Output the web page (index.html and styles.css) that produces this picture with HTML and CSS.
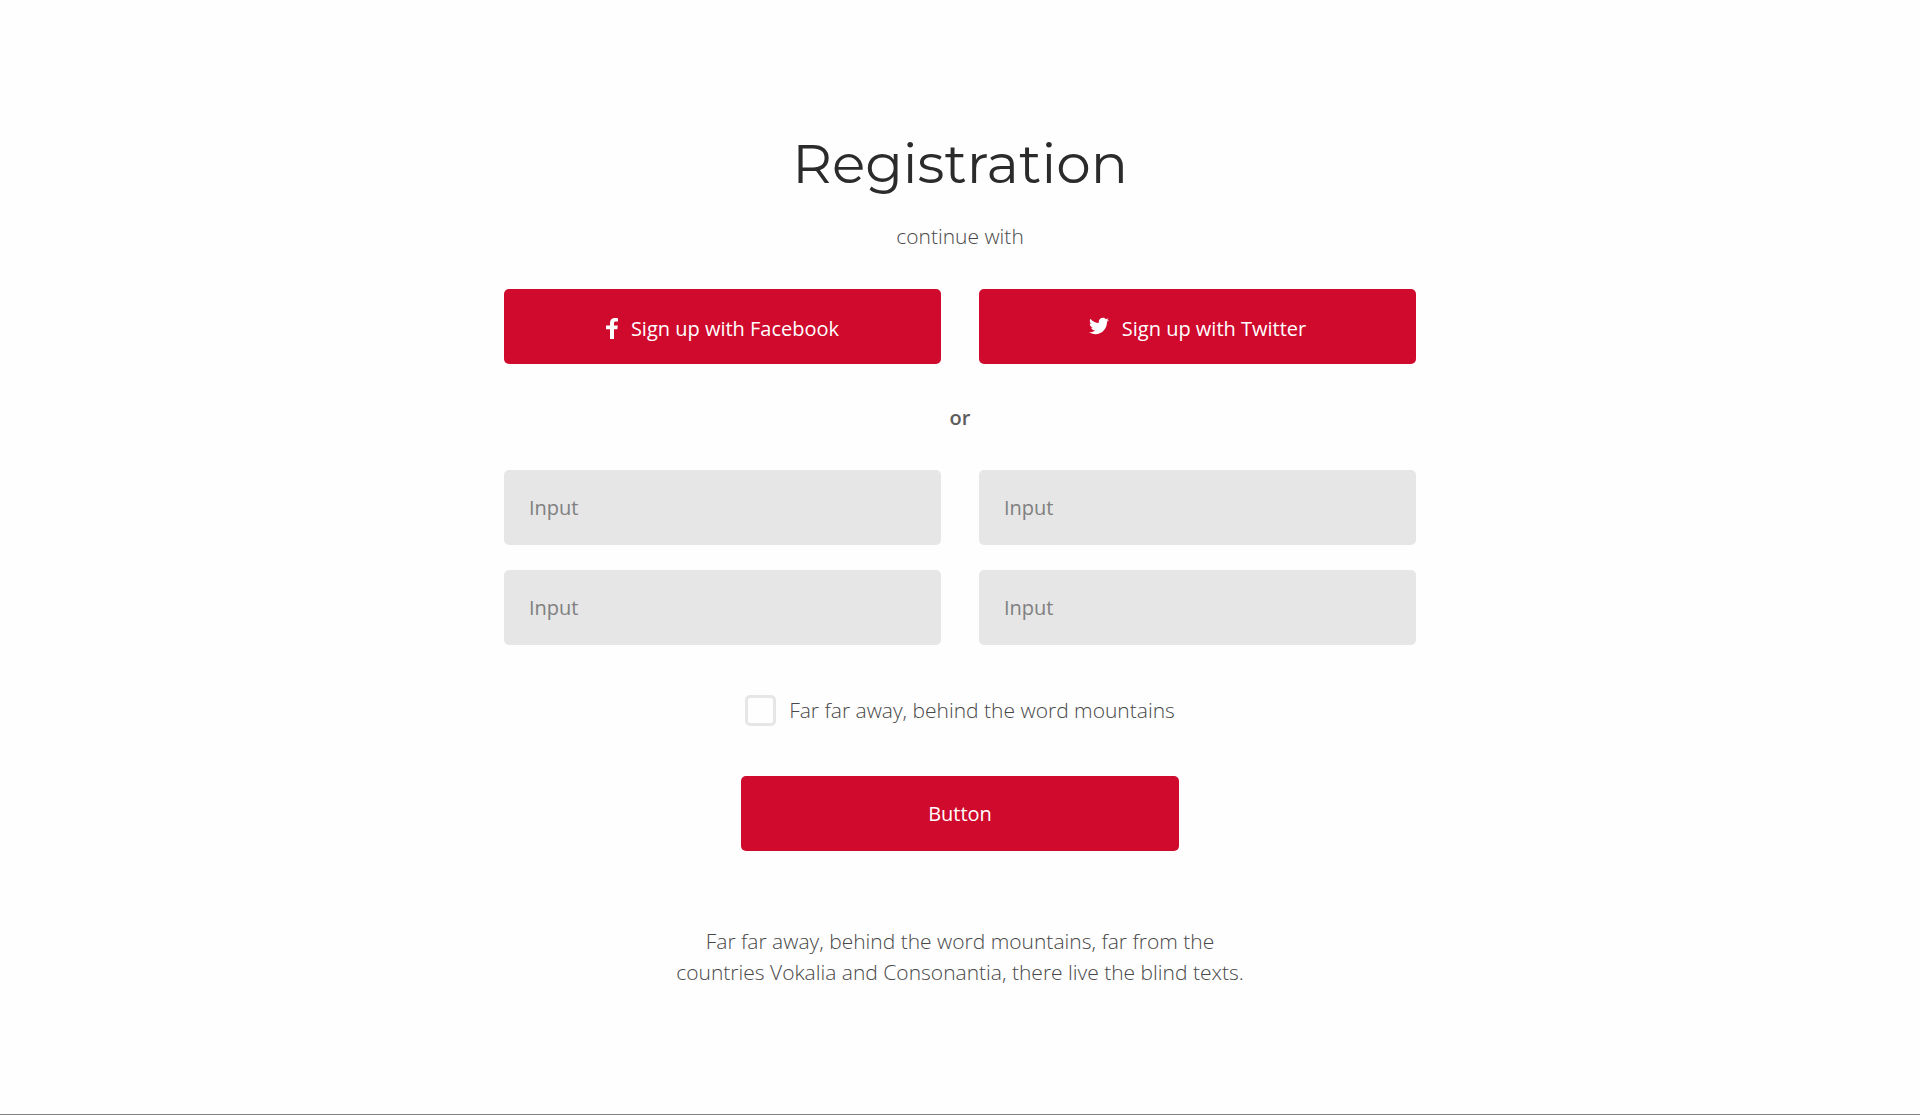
FILE: index.html
```html
<!DOCTYPE html>
<html lang="en">
<head>
    <meta charset="UTF-8">
    <meta name="viewport" content="width=device-width, initial-scale=1.0">
    <title>Registration</title>
    <link rel="stylesheet" href="styles.css">
</head>
<body>
    <main class="registration">
        <h1 class="title">Registration</h1>
        <p class="subtitle">continue with</p>

        <form class="form">
            <!-- Social sign up -->
            <div class="row">
                <button type="button" class="btn btn-social">
                    <svg class="icon icon-facebook" viewBox="0 0 12 21" aria-hidden="true">
                        <path d="M12 .2v3.400h-2C8.500 3.600 8 4.200 8 5.300V7.500h3.800l-.5 3.700H8V21H4v-9.800H0V7.500h4V4.900C4 1.700 5.900 0 9 0c1.400 0 2.500.1 3 .2z"/>
                    </svg>
                    <span>Sign up with Facebook</span>
                </button>
                <button type="button" class="btn btn-social">
                    <svg class="icon icon-twitter" viewBox="0 0 24 24" aria-hidden="true">
                        <path d="M23.954 4.569c-.885.389-1.830.654-2.825.775 1.014-.611 1.794-1.574 2.163-2.723-.951.555-2.005.959-3.127 1.184-.896-.959-2.173-1.559-3.591-1.559-2.717 0-4.920 2.203-4.920 4.917 0 .390.045.765.127 1.124C7.691 8.094 4.066 6.130 1.640 3.161c-.427.722-.666 1.561-.666 2.475 0 1.710.870 3.213 2.188 4.096-.807-.026-1.566-.248-2.228-.616v.061c0 2.385 1.693 4.374 3.946 4.827-.413.111-.849.171-1.296.171-.314 0-.615-.030-.916-.086.631 1.953 2.445 3.377 4.604 3.417-1.680 1.319-3.809 2.105-6.102 2.105-.390 0-.779-.023-1.170-.067 2.189 1.394 4.768 2.209 7.557 2.209 9.054 0 13.999-7.496 13.999-13.986 0-.209 0-.420-.015-.630.961-.689 1.800-1.560 2.460-2.548l-.047-.020z"/>
                    </svg>
                    <span>Sign up with Twitter</span>
                </button>
            </div>

            <p class="divider">or</p>

            <!-- Fields -->
            <div class="row">
                <input type="text" class="field" placeholder="Input" aria-label="Input 1">
                <input type="text" class="field" placeholder="Input" aria-label="Input 2">
                <input type="text" class="field" placeholder="Input" aria-label="Input 3">
                <input type="text" class="field" placeholder="Input" aria-label="Input 4">
            </div>

            <label class="check" for="agree">
                <input type="checkbox" class="check-box" id="agree">
                <span>Far far away, behind the word mountains</span>
            </label>

            <button type="submit" class="btn btn-submit">Button</button>
        </form>

        <p class="note">Far far away, behind the word mountains, far from the countries Vokalia and Consonantia, there live the blind texts.</p>
    </main>
</body>
</html>
```

FILE: styles.css
```css
* {
    box-sizing: border-box;
}

body {
    margin: 0;
    min-height: 100vh;
    background-color: #fefefe;
    border-bottom: 1px solid #808080;
    color: #484848;
    font-family: 'Open Sans', sans-serif;
    font-size: 21px;
    font-weight: 300;
    line-height: 31px;
}

.registration {
    display: flex;
    flex-direction: column;
    align-items: center;
    max-width: 952px;
    margin: 0 auto;
    padding: 128px 20px 125px;
    text-align: center;
}

.title {
    margin: 0 0 21px;
    color: #2b2b2b;
    font-family: 'Montserrat', 'Inter', sans-serif;
    font-size: 55px;
    font-weight: 400;
    line-height: 72px;
}

.subtitle {
    margin: 0 0 37px;
}

.form {
    display: flex;
    flex-direction: column;
    align-items: center;
    width: 100%;
}

.row {
    display: grid;
    grid-template-columns: 1fr 1fr;
    gap: 25px 38px;
    width: 100%;
}

.btn {
    display: flex;
    justify-content: center;
    align-items: center;
    gap: 13px;
    height: 75px;
    padding: 0 25px;
    border: none;
    border-radius: 5px;
    background-color: #cf0a2c;
    color: #fff;
    font-family: inherit;
    font-size: 20px;
    font-weight: 400;
    line-height: 31px;
    cursor: pointer;
}

.btn:hover {
    background-color: #b50926;
}

.btn-social {
    padding-top: 4px;
}

.icon {
    fill: #fff;
}

.icon-facebook {
    width: 12px;
    height: 21px;
}

.icon-twitter {
    width: 20px;
    height: 20px;
    margin-bottom: 5px;
}

.divider {
    margin: 38px 0 37px;
    color: #5c5c5c;
    font-size: 20px;
    font-weight: 600;
}

.field {
    width: 100%;
    height: 75px;
    padding: 0 25px;
    border: none;
    border-radius: 5px;
    background-color: #e6e6e6;
    color: #2b2b2b;
    font-family: inherit;
    font-size: 20px;
    font-weight: 400;
}

.field::placeholder {
    color: #808080;
    opacity: 1;
}

.check {
    display: flex;
    align-items: center;
    gap: 13px;
    margin: 50px 0;
    cursor: pointer;
}

.check-box {
    appearance: none;
    flex: none;
    width: 31px;
    height: 31px;
    margin: 0;
    border: 3px solid #e6e6e6;
    border-radius: 5px;
    cursor: pointer;
}

.check-box:checked {
    background-color: #cf0a2c;
}

.btn-submit {
    width: 100%;
    max-width: 438px;
}

.note {
    max-width: 580px;
    margin: 75px 0 0;
}
```
